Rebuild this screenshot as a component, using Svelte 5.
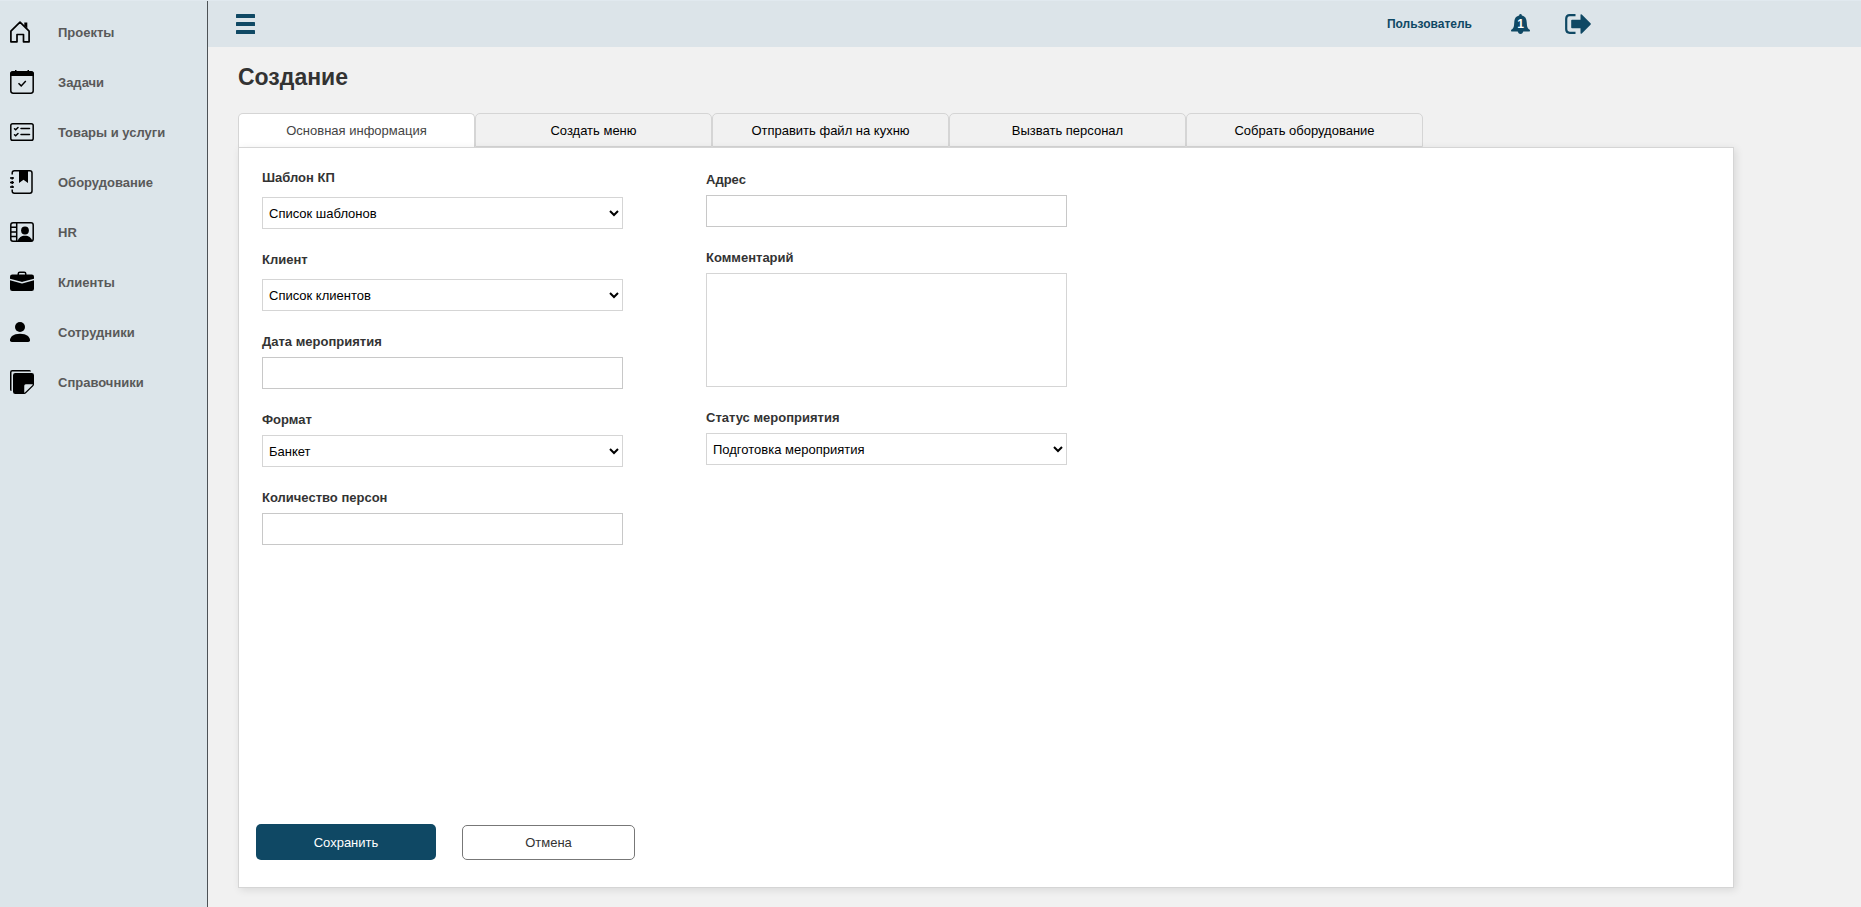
<script>
  const menu = [
    { id: 'home', label: 'Проекты' },
    { id: 'calendar', label: 'Задачи' },
    { id: 'checklist', label: 'Товары и услуги' },
    { id: 'journal', label: 'Оборудование' },
    { id: 'contacts', label: 'HR' },
    { id: 'briefcase', label: 'Клиенты' },
    { id: 'person', label: 'Сотрудники' },
    { id: 'stickies', label: 'Справочники' },
  ];

  const tabs = [
    'Основная информация',
    'Создать меню',
    'Отправить файл на кухню',
    'Вызвать персонал',
    'Собрать оборудование',
  ];

  let activeTab = $state(0);
  let address = $state('');
  let comment = $state('');
  let date = $state('');
  let persons = $state('');
</script>

{#snippet icon(id)}
  {#if id === 'home'}
    <svg class="icon small" viewBox="0 0 20 22" fill="none" stroke="#000" stroke-width="1.7" stroke-linejoin="round" aria-hidden="true">
      <path d="M.9 20.800V10.200L10 1.200l9.100 9v10.600h-5.600v-7.300H7v7.300z" />
      <path d="M14.300 1.500h3v6l-3-3z" fill="#000" stroke="none" />
    </svg>
  {:else if id === 'calendar'}
    <svg class="icon" viewBox="0 0 24 24" aria-hidden="true">
      <rect x=".8" y="2" width="22.4" height="21.2" rx="2.4" fill="none" stroke="#000" stroke-width="1.5" />
      <path d="M0 6V4q0-3 3-3h2V0h1.5v1h11V0H19v1h2q3 0 3 3v2z" />
      <path d="M8.5 13.3l2.7 2.6 4.6-4.8" fill="none" stroke="#000" stroke-width="1.5" />
    </svg>
  {:else if id === 'checklist'}
    <svg class="icon" viewBox="0 0 24 24" fill="none" stroke="#000" stroke-width="1.5" aria-hidden="true">
      <rect x=".8" y="3.800" width="22.400" height="16.400" rx="1.800" />
      <path d="M11 8.500h8.500M11 14.500h8.500M4.500 8.700l1.200 1.100 2.300-2.300M4.500 14.700l1.200 1.100 2.300-2.300" stroke-linecap="round" />
    </svg>
  {:else if id === 'journal'}
    <svg class="icon" viewBox="0 0 24 24" aria-hidden="true">
      <path d="M2.200 4.500V3q0-2.200 2.200-2.200h15.400Q22 .8 22 3v18q0 2.200-2.200 2.200H4.400q-2.200 0-2.200-2.200v-1.500" fill="none" stroke="#000" stroke-width="1.500" />
      <path d="M2.200 7v2.500M2.200 11v3M2.200 15.500v2.500" stroke="#000" stroke-width="1.500" />
      <path d="M0 8h4M0 12.500h4M0 17h4" stroke="#000" stroke-width="1.500" />
      <path d="M9 1h9v12l-4.500-3.300L9 13z" />
    </svg>
  {:else if id === 'contacts'}
    <svg class="icon" viewBox="0 0 24 24" aria-hidden="true">
      <rect x=".8" y="2.800" width="22.400" height="18.400" rx="2.200" fill="none" stroke="#000" stroke-width="1.500" />
      <path d="M6.700 3v18M1 7.300h5.700M1 11.900h5.700M1 16.500h5.700" stroke="#000" stroke-width="1.500" />
      <circle cx="15" cy="10.500" r="3.900" />
      <path d="M7.500 21.500c1.200-4 3.800-5.700 7.500-5.700s6.300 1.700 7.500 5.700z" />
    </svg>
  {:else if id === 'briefcase'}
    <svg class="icon" viewBox="0 0 16 16" aria-hidden="true">
      <path d="M6.500 1A1.500 1.500 0 0 0 5 2.500V3H1.500A1.500 1.500 0 0 0 0 4.500v1.384l7.614 2.030a1.500 1.500 0 0 0 .772 0L16 5.884V4.500A1.500 1.500 0 0 0 14.500 3H11v-.5A1.500 1.500 0 0 0 9.500 1zm0 1h3a.5.5 0 0 1 .5.5V3H6v-.5a.5.5 0 0 1 .5-.5" />
      <path d="M0 12.500A1.500 1.500 0 0 0 1.500 14h13a1.500 1.500 0 0 0 1.500-1.500V6.850L8.129 8.950a.5.5 0 0 1-.258 0L0 6.850z" />
    </svg>
  {:else if id === 'person'}
    <svg class="icon small" viewBox="0 0 20 22" aria-hidden="true">
      <circle cx="10" cy="6" r="5" />
      <path d="M0 19.200C0 16 3.200 12.700 10 12.700s10 3.300 10 6.500q0 1.800-1.800 1.800H1.800Q0 21 0 19.200z" />
    </svg>
  {:else}
    <svg class="icon" viewBox="0 0 16 16" aria-hidden="true">
      <path d="M0 1.500V13a1 1 0 0 0 1 1V1.500a.5.5 0 0 1 .5-.5H14a1 1 0 0 0-1-1H1.500A1.500 1.500 0 0 0 0 1.500" />
      <path d="M3.500 2A1.500 1.500 0 0 0 2 3.500v11A1.500 1.500 0 0 0 3.500 16h6.086a1.500 1.500 0 0 0 1.060-.44l4.915-4.914A1.500 1.500 0 0 0 16 9.586V3.500A1.500 1.500 0 0 0 14.500 2zm6 8.500a1 1 0 0 1 1-1h4.396a.25.25 0 0 1 .177.427l-5.146 5.146a.25.25 0 0 1-.427-.177z" />
    </svg>
  {/if}
{/snippet}

<div class="app">
  <aside class="sidebar">
    <nav>
      {#each menu as item}
        <a class="menu-item" href="#{item.id}">
          <span class="icon-box">{@render icon(item.id)}</span>
          <span>{item.label}</span>
        </a>
      {/each}
    </nav>
  </aside>

  <div class="content">
    <header class="topbar">
      <button class="icon-button" type="button" aria-label="Меню">
        <svg width="19" height="20" viewBox="0 0 19 20" fill="#0f4864">
          <rect width="19" height="4" rx=".6" />
          <rect y="8" width="19" height="4" rx=".6" />
          <rect y="16" width="19" height="4" rx=".6" />
        </svg>
      </button>
      <div class="user-area">
        <a class="user" href="#profile">Пользователь</a>
        <button class="icon-button" type="button" aria-label="Уведомления">
          <svg width="19" height="20" viewBox="0 0 19 20" fill="#0f4864">
            <path d="M9.500 0q1.200 0 1.400 1.400C14.300 2.200 15.500 4.700 15.700 8l.3 3.500c.2 2 1 3.200 2.700 4.300.5.500.3 1.700-.5 1.700H.8c-.8 0-1-1.200-.5-1.700C2 14.700 2.800 13.500 3 11.500L3.300 8c.2-3.300 1.400-5.800 4.800-6.600Q8.300 0 9.500 0z" />
            <path d="M6.700 17h5.600q-.5 3-2.800 3t-2.800-3z" />
          </svg>
          <span class="count">1</span>
        </button>
        <button class="icon-button" type="button" aria-label="Выйти">
          <svg width="26" height="20" viewBox="0 0 26 20">
            <path d="M10.500 1.200H4.700Q1.200 1.200 1.200 4.700v10.600q0 3.500 3.500 3.500h5.800" fill="none" stroke="#0f4864" stroke-width="2.200" />
            <path d="M7 5.800h8.500V1.200q0-1.600 1.300-.6l8.700 8.700q.7.700 0 1.400l-8.700 8.700q-1.300 1-1.300-.6v-4.600H7q-.8 0-.8-.8V6.600q0-.8.8-.8z" fill="#0f4864" />
          </svg>
        </button>
      </div>
    </header>

    <main>
      <h1>Создание</h1>

      <div class="tabs" role="tablist">
        {#each tabs as tab, i}
          <button
            class="tab"
            class:active={activeTab === i}
            type="button"
            role="tab"
            aria-selected={activeTab === i}
            onclick={() => (activeTab = i)}
          >{tab}</button>
        {/each}
      </div>

      <form class="panel" onsubmit={(e) => e.preventDefault()}>
        <div class="columns">
          <div class="column">
            <div class="field wide">
              <label for="template">Шаблон КП</label>
              <select id="template"><option>Список шаблонов</option></select>
            </div>
            <div class="field wide">
              <label for="client">Клиент</label>
              <select id="client"><option>Список клиентов</option></select>
            </div>
            <div class="field">
              <label for="date">Дата мероприятия</label>
              <input id="date" type="text" bind:value={date} />
            </div>
            <div class="field">
              <label for="format">Формат</label>
              <select id="format"><option>Банкет</option></select>
            </div>
            <div class="field">
              <label for="persons">Количество персон</label>
              <input id="persons" type="text" bind:value={persons} />
            </div>
          </div>

          <div class="column second">
            <div class="field">
              <label for="address">Адрес</label>
              <input id="address" type="text" bind:value={address} />
            </div>
            <div class="field">
              <label for="comment">Комментарий</label>
              <textarea id="comment" bind:value={comment}></textarea>
            </div>
            <div class="field">
              <label for="status">Статус мероприятия</label>
              <select id="status"><option>Подготовка мероприятия</option></select>
            </div>
          </div>
        </div>

        <div class="actions">
          <button class="save" type="submit">Сохранить</button>
          <button class="cancel" type="button">Отмена</button>
        </div>
      </form>
    </main>
  </div>
</div>

<style>
  :global(body) {
    background: #f1f1f1;
    font-family: 'Liberation Sans', Arial, sans-serif;
    font-size: 13px;
    color: #333;
  }

  .app {
    box-sizing: border-box;
    display: flex;
    min-height: 100vh;
    border-top: 1px solid #e1e9ef;
  }

  .sidebar {
    box-sizing: border-box;
    flex: 0 0 208px;
    padding-top: 6px;
    background: #dce5ea;
    border-right: 1px solid #4d5256;
  }

  .menu-item {
    display: flex;
    align-items: center;
    height: 50px;
    padding-left: 10px;
    color: #595959;
    font-weight: bold;
    text-decoration: none;
  }

  .icon-box {
    display: flex;
    width: 48px;
  }

  .icon {
    width: 24px;
    height: 24px;
  }

  .icon.small {
    width: 20px;
    height: 22px;
  }

  .content {
    flex: 1;
    min-width: 0;
    display: flex;
    flex-direction: column;
  }

  .topbar {
    box-sizing: border-box;
    display: flex;
    align-items: center;
    justify-content: space-between;
    height: 46px;
    padding: 0 270px 0 28px;
    background: #dce4e9;
  }

  .icon-button {
    position: relative;
    display: flex;
    padding: 0;
    border: none;
    background: none;
    cursor: pointer;
  }

  .user-area {
    display: flex;
    align-items: center;
    gap: 35px;
  }

  .user {
    margin-right: 4px;
    color: #0f4864;
    font-size: 12px;
    font-weight: bold;
    text-decoration: none;
  }

  .count {
    position: absolute;
    inset: 0;
    color: #fff;
    font-size: 12px;
    font-weight: bold;
    line-height: 20px;
    text-align: center;
  }

  main {
    flex: 1;
    display: flex;
    flex-direction: column;
    padding: 14px 127px 19px 30px;
  }

  h1 {
    margin: 0 0 20px;
    font-size: 23px;
    line-height: 32px;
  }

  .tabs {
    display: flex;
  }

  .tab {
    box-sizing: border-box;
    width: 237px;
    height: 34px;
    padding: 0;
    border: 1px solid #d5d5d5;
    border-radius: 5px 5px 0 0;
    background: #f1f1f1;
    color: #000;
    font: inherit;
    cursor: pointer;
  }

  .tab.active {
    border-bottom: none;
    background: #fff;
    color: #444;
  }

  .panel {
    flex: 1;
    display: flex;
    flex-direction: column;
    justify-content: space-between;
    padding: 22px 17px 27px;
    border: 1px solid #d5d5d5;
    background: #fff;
    box-shadow: 2px 2px 8px rgba(0, 0, 0, 0.1);
  }

  .columns {
    display: flex;
    gap: 83px;
    padding-left: 6px;
  }

  .column {
    display: flex;
    flex-direction: column;
    gap: 23px;
    width: 361px;
  }

  .column.second {
    padding-top: 2px;
  }

  .field {
    display: flex;
    flex-direction: column;
    gap: 7px;
  }

  .field.wide {
    gap: 11px;
  }

  label {
    font-weight: bold;
    line-height: 16px;
  }

  select,
  input,
  textarea {
    box-sizing: border-box;
    width: 100%;
    height: 32px;
    margin: 0;
    border: 1px solid #d5d5d5;
    border-radius: 0;
    background: #fff;
    color: #000;
    font: inherit;
  }

  select {
    padding: 0 2px;
  }

  input {
    padding: 0 6px;
    border-color: #c8c8c8;
  }

  textarea {
    height: 114px;
    padding: 6px;
    resize: none;
  }

  .actions {
    display: flex;
    align-items: flex-end;
    gap: 26px;
  }

  .save,
  .cancel {
    box-sizing: border-box;
    padding: 0;
    border-radius: 5px;
    font: inherit;
    cursor: pointer;
  }

  .save {
    width: 180px;
    height: 36px;
    border: none;
    background: #0f4864;
    color: #fff;
  }

  .cancel {
    width: 173px;
    height: 35px;
    border: 1px solid #777;
    background: #fff;
    color: #333;
  }
</style>
